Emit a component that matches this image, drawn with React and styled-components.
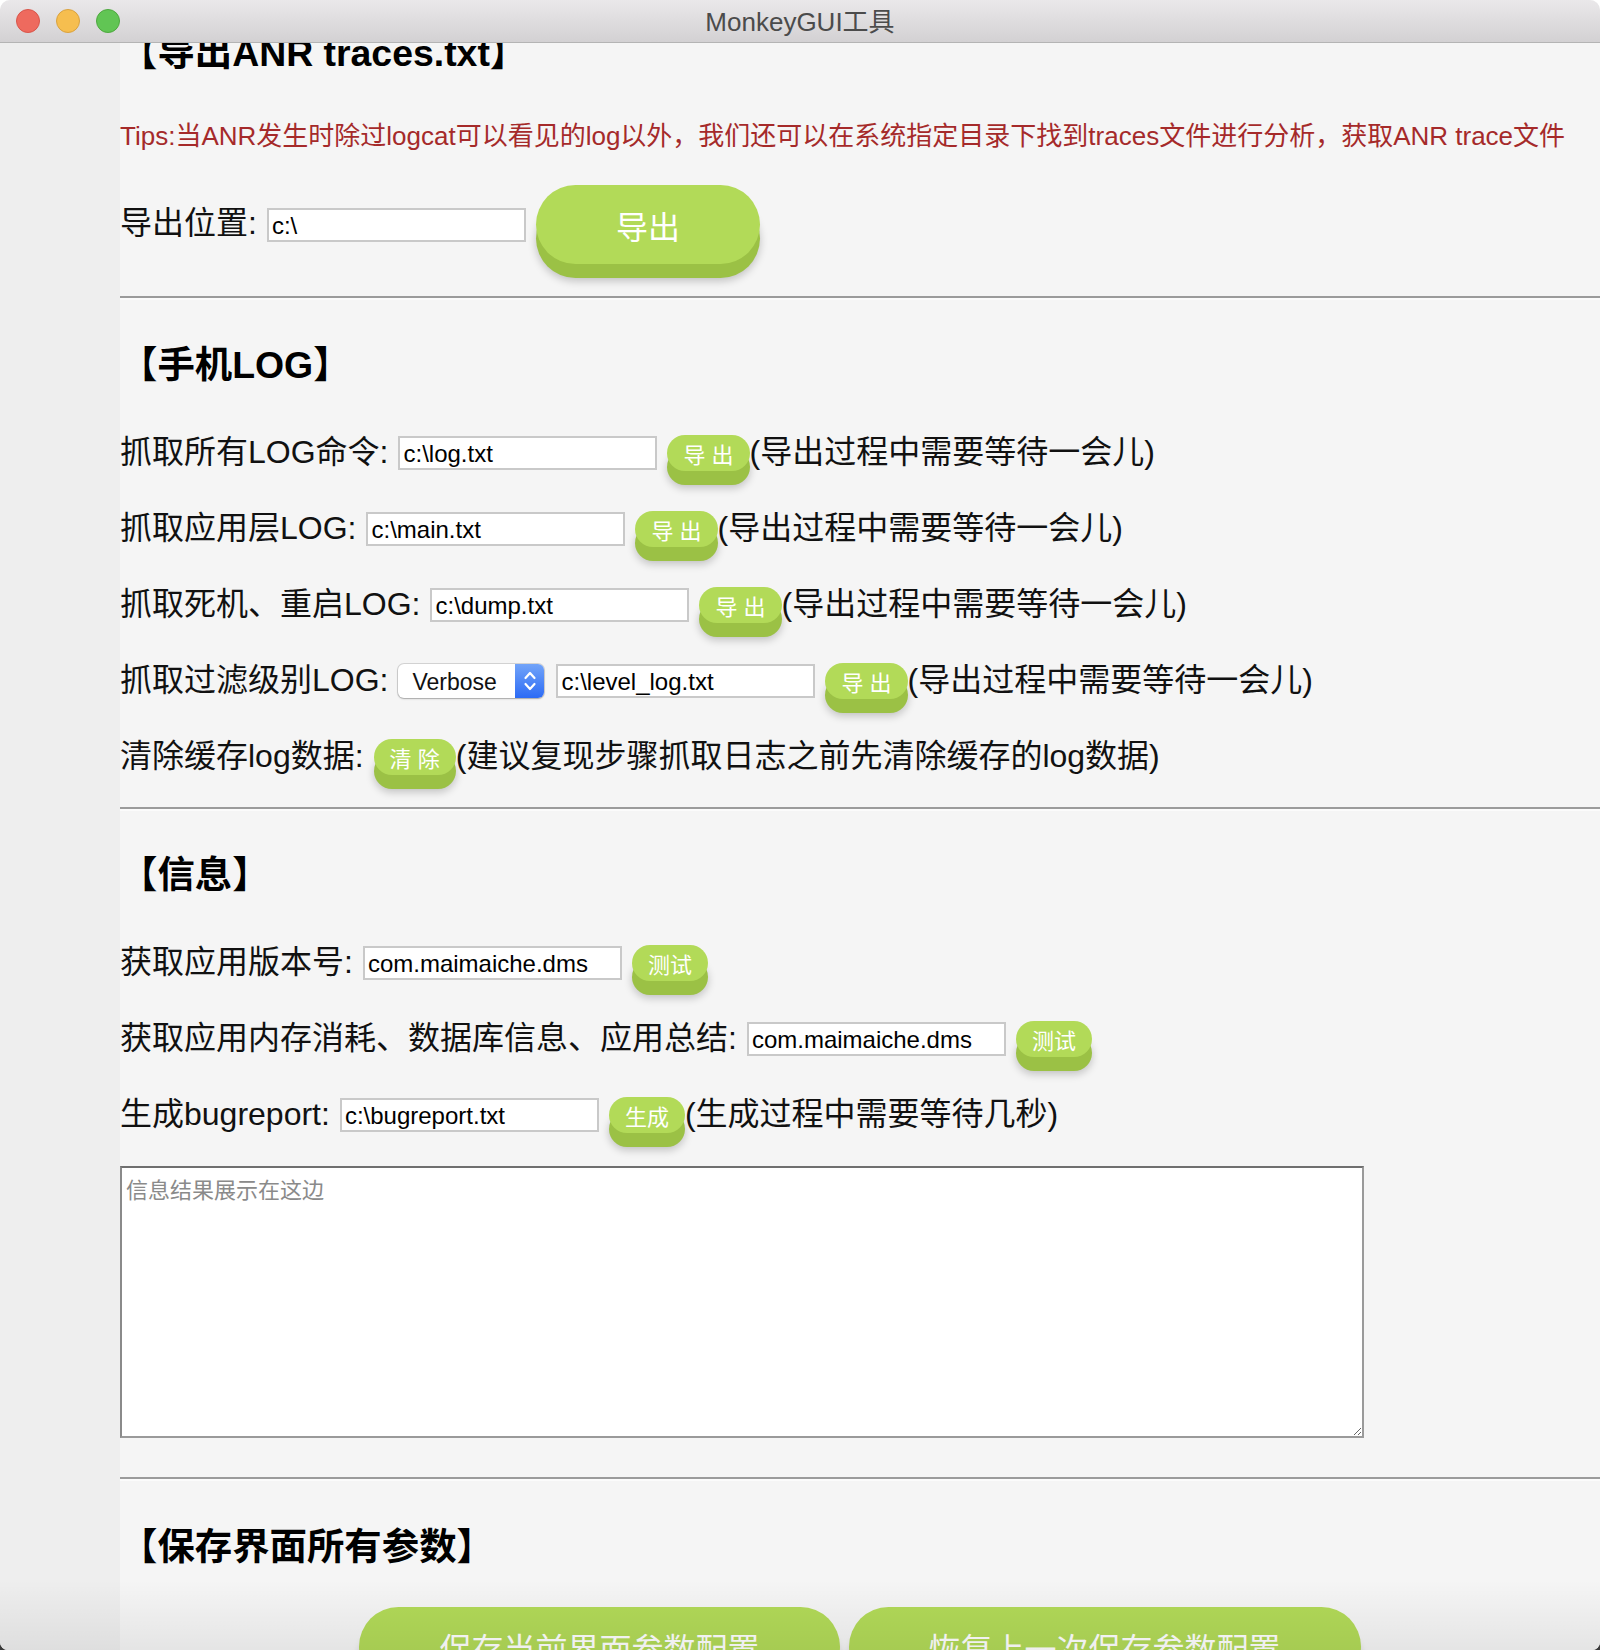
import React, { useLayoutEffect, useRef } from 'react';
import styled, { createGlobalStyle, css } from 'styled-components';

const GlobalStyle = createGlobalStyle`
  html, body { margin: 0; padding: 0; }
  body {
    background: linear-gradient(#ffffff 0 50%, #3a3a3a 50% 100%);
    font-family: "Liberation Sans", "Noto Sans CJK SC", sans-serif;
  }
  #root { width: 1600px; height: 1650px; }
  * { box-sizing: border-box; }
`;

const Window = styled.div`
  position: relative;
  width: 1600px;
  height: 1650px;
  display: flex;
  flex-direction: column;
  border-radius: 10px 10px 8px 8px;
  overflow: hidden;
  background: #f5f5f5;
`;

const TitleBar = styled.header`
  flex: 0 0 auto;
  height: 43px;
  display: grid;
  grid-template-columns: 1fr auto 1fr;
  align-items: center;
  background: linear-gradient(#eae8ea, #d3d1d3);
  border-bottom: 1px solid #b4b4b4;
`;

const Lights = styled.div`
  display: flex;
  gap: 16px;
  padding-left: 16px;
`;

const Light = styled.span`
  width: 24px;
  height: 24px;
  border-radius: 50%;
  background: ${p => p.$fill};
  border: 1px solid ${p => p.$edge};
`;

const Title = styled.div`
  font-size: 26px;
  color: #4b4b4b;
  line-height: 1;
  padding-top: 2px;
`;

const Body = styled.div`
  flex: 1 1 auto;
  min-height: 0;
  display: flex;
`;

const Sidebar = styled.aside`
  flex: 0 0 120px;
  background: #eeeeee;
`;

const Viewport = styled.main`
  flex: 1 1 auto;
  overflow: hidden;
  background: #f5f5f5;
`;

const Content = styled.div`
  display: flex;
  flex-direction: column;
  padding-bottom: 60px;
`;

const Section = styled.section`
  display: flex;
  flex-direction: column;
  padding-top: ${p => p.$top || 0}px;
`;

const Heading = styled.h3`
  margin: 0;
  font-size: 37.4px;
  line-height: 44px;
  font-weight: bold;
  color: #000;
  white-space: nowrap;
`;

const Tips = styled.p`
  margin: 43px 0 0;
  font-size: 26px;
  line-height: 36px;
  color: #a52a2a;
  white-space: nowrap;
`;

const Rows = styled.div`
  display: flex;
  flex-direction: column;
  margin-top: ${p => p.$top}px;
`;

const Row = styled.div`
  display: flex;
  align-items: center;
  gap: 10px;
  height: ${p => p.$height || 76}px;
  white-space: nowrap;
`;

const Label = styled.span`
  font-size: 32px;
  line-height: 40px;
  padding-bottom: 3px;
  color: #111;
`;

const Note = styled.span`
  font-size: 32px;
  line-height: 40px;
  padding-bottom: 3px;
  color: #111;
`;

const ActionGroup = styled.span`
  display: flex;
  align-items: center;
`;

const Field = styled.input`
  flex: 0 0 auto;
  width: 259px;
  height: 34px;
  padding: 2px 3px 0;
  border: 2px solid #c9c9c9;
  background: #fff;
  color: #000;
  font-family: "Liberation Sans", "Noto Sans CJK SC", sans-serif;
  font-size: 24px;
  outline: none;
`;

const PillButton = styled.button`
  flex: 0 0 auto;
  border: none;
  border-radius: 999px;
  background: #b2da58;
  color: #fff;
  font-family: "Liberation Sans", "Noto Sans CJK SC", sans-serif;
  white-space: nowrap;
  cursor: pointer;
  box-shadow: 0 14px 0 #9bc145, 0 17px 9px rgba(0, 0, 0, 0.22);
  ${p => p.$large ? css`
    height: 79px;
    padding: 0 80px;
    font-size: 32px;
  ` : css`
    height: 36px;
    padding: 0 16px;
    font-size: 22px;
  `}
`;

const SelectBox = styled.div`
  flex: 0 0 auto;
  display: flex;
  width: 146px;
  height: 34px;
  margin-right: 2px;
  border-radius: 6px;
  overflow: hidden;
  background: #fff;
  box-shadow: 0 0 0 1px rgba(0, 0, 0, 0.13), 0 1px 2px rgba(0, 0, 0, 0.22);
`;

const SelectValue = styled.span`
  flex: 1;
  display: flex;
  align-items: center;
  padding: 2px 0 0 14px;
  font-size: 23px;
  color: #111;
`;

const SelectArrow = styled.span`
  flex: 0 0 29px;
  display: flex;
  align-items: center;
  justify-content: center;
  background: linear-gradient(#72a4f9, #2c6bf5);
`;

const Divider = styled.hr`
  margin: ${p => p.$top}px 0 0;
  height: 0;
  border: none;
  border-top: 2px solid #9b9b9b;
  border-bottom: 2px solid #fbfbfb;
`;

const ResultArea = styled.textarea`
  margin-top: 13px;
  width: 1244px;
  height: 272px;
  padding: 4px 4px;
  border: 2px solid #9a9a9a;
  border-top-color: #6f6f6f;
  border-left-color: #8a8a8a;
  background: #fff;
  font-family: "Liberation Sans", "Noto Sans CJK SC", sans-serif;
  font-size: 22px;
  color: #000;
  outline: none;
  &::placeholder { color: #8a8a8a; }
`;

const ButtonBar = styled.div`
  margin-top: 38px;
  display: flex;
  justify-content: center;
  gap: 9px;
`;

const BottomShade = styled.div`
  position: absolute;
  left: 0;
  right: 0;
  bottom: 0;
  height: 70px;
  pointer-events: none;
  background: linear-gradient(rgba(0, 0, 0, 0), rgba(0, 0, 0, 0.065));
`;

const Chevrons = () => (
  <svg width="14" height="26" viewBox="0 0 14 26" fill="none" stroke="#fff" strokeWidth="2.2" strokeLinecap="round" strokeLinejoin="round">
    <path d="M2.5 10 L7 5 L11.5 10" />
    <path d="M2.5 16 L7 21 L11.5 16" />
  </svg>
);

const WAIT = '(导出过程中需要等待一会儿)';

const logRows = [
  { label: '抓取所有LOG命令:', value: 'c:\\log.txt', btn: '导 出', note: WAIT },
  { label: '抓取应用层LOG:', value: 'c:\\main.txt', btn: '导 出', note: WAIT },
  { label: '抓取死机、重启LOG:', value: 'c:\\dump.txt', btn: '导 出', note: WAIT },
  { label: '抓取过滤级别LOG:', select: 'Verbose', value: 'c:\\level_log.txt', btn: '导 出', note: WAIT },
  { label: '清除缓存log数据:', btn: '清 除', note: '(建议复现步骤抓取日志之前先清除缓存的log数据)' },
];

const infoRows = [
  { label: '获取应用版本号:', value: 'com.maimaiche.dms', btn: '测试' },
  { label: '获取应用内存消耗、数据库信息、应用总结:', value: 'com.maimaiche.dms', btn: '测试' },
  { label: '生成bugreport:', value: 'c:\\bugreport.txt', btn: '生成', note: '(生成过程中需要等待几秒)' },
];

const FormRow = ({ row }) => (
  <Row>
    <Label>{row.label}</Label>
    {row.select && (
      <SelectBox>
        <SelectValue>{row.select}</SelectValue>
        <SelectArrow><Chevrons /></SelectArrow>
      </SelectBox>
    )}
    {row.value && <Field readOnly defaultValue={row.value} />}
    <ActionGroup>
      <PillButton>{row.btn}</PillButton>
      {row.note && <Note>{row.note}</Note>}
    </ActionGroup>
  </Row>
);

export default function App() {
  const viewRef = useRef(null);
  useLayoutEffect(() => {
    if (viewRef.current) viewRef.current.scrollTop = 12;
  }, []);

  return (
    <>
      <GlobalStyle />
      <Window>
        <TitleBar>
          <Lights>
            <Light $fill="#ee6a5e" $edge="#d8554a" />
            <Light $fill="#f6be4f" $edge="#d9a23f" />
            <Light $fill="#61c554" $edge="#4ea83f" />
          </Lights>
          <Title>MonkeyGUI工具</Title>
          <span />
        </TitleBar>
        <Body>
          <Sidebar />
          <Viewport ref={viewRef}>
            <Content>
              <Section>
                <Heading>【导出ANR traces.txt】</Heading>
                <Tips>Tips:当ANR发生时除过logcat可以看见的log以外，我们还可以在系统指定目录下找到traces文件进行分析，获取ANR trace文件</Tips>
                <Rows $top={31}>
                  <Row $height={79}>
                    <Label>导出位置:</Label>
                    <Field readOnly defaultValue="c:\" />
                    <PillButton $large>导出</PillButton>
                  </Row>
                </Rows>
                <Divider $top={32} />
              </Section>

              <Section $top={43}>
                <Heading>【手机LOG】</Heading>
                <Rows $top={28}>
                  {logRows.map((r, i) => <FormRow key={i} row={r} />)}
                </Rows>
                <Divider $top={12} />
              </Section>

              <Section $top={42}>
                <Heading>【信息】</Heading>
                <Rows $top={28}>
                  {infoRows.map((r, i) => <FormRow key={i} row={r} />)}
                </Rows>
                <ResultArea placeholder="信息结果展示在这边" />
                <Divider $top={39} />
              </Section>

              <Section $top={44}>
                <Heading>【保存界面所有参数】</Heading>
                <ButtonBar>
                  <PillButton $large>保存当前界面参数配置</PillButton>
                  <PillButton $large>恢复上一次保存参数配置</PillButton>
                </ButtonBar>
              </Section>
            </Content>
          </Viewport>
        </Body>
        <BottomShade />
      </Window>
    </>
  );
}
